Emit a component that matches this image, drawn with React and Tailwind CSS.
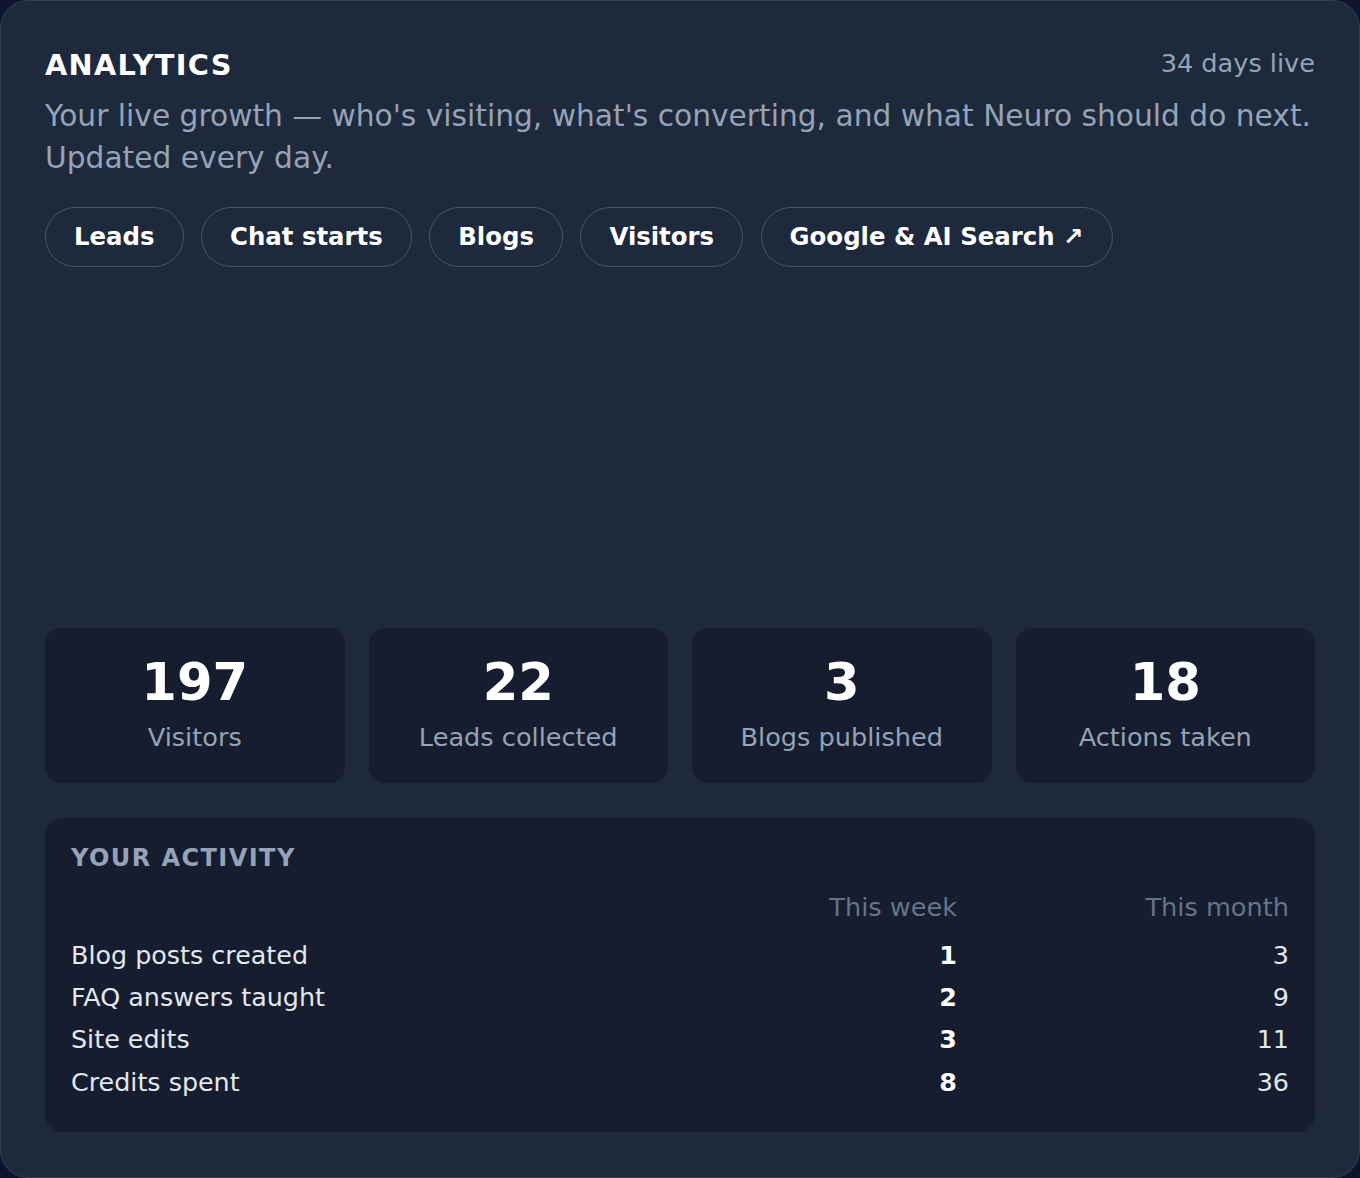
import React from "react";

const tabs = ["Leads", "Chat starts", "Blogs", "Visitors", "Google & AI Search ↗"];

const stats = [
  { value: "197", label: "Visitors" },
  { value: "22", label: "Leads collected" },
  { value: "3", label: "Blogs published" },
  { value: "18", label: "Actions taken" },
];

const activity = [
  { label: "Blog posts created", week: "1", month: "3" },
  { label: "FAQ answers taught", week: "2", month: "9" },
  { label: "Site edits", week: "3", month: "11" },
  { label: "Credits spent", week: "8", month: "36" },
];

export default function App() {
  return (
    <div
      className="min-h-screen bg-[#0c1430]"
      style={{ fontFamily: '"DejaVu Sans", Verdana, sans-serif' }}
    >
      <div className="h-[1178px] rounded-[28px] border border-[#334155] bg-[#1e293b] px-[44px] pt-[44px]">
        {/* header */}
        <div className="flex items-start justify-between">
          <h1 className="text-[28.8px] font-bold leading-[1.4] tracking-[0.045em] text-white">
            ANALYTICS
          </h1>
          <span className="mt-[1px] text-[25.6px] leading-[1.4] text-[#94a3b8]">34 days live</span>
        </div>
        <p className="mt-[10px] text-[29.7px] leading-[42px] text-[#94a3b8]">
          Your live growth — who's visiting, what's converting, and what Neuro should do next.
          Updated every day.
        </p>

        {/* tabs */}
        <div className="mt-[28px] flex gap-[17.5px]">
          {tabs.map((t) => (
            <button
              key={t}
              className="flex h-[60px] items-center rounded-full border-[1.5px] border-[#4a5568] px-[28px] text-[24.4px] font-bold text-white"
            >
              {t}
            </button>
          ))}
        </div>

        {/* chart area (empty) */}
        <div className="h-[361px]"></div>

        {/* stats */}
        <div className="grid grid-cols-4 gap-[24px]">
          {stats.map((s) => (
            <div
              key={s.label}
              className="flex flex-col items-center rounded-[16px] bg-[#151d2e] pt-[24px] pb-[27px]"
            >
              <div className="text-[51.2px] font-bold leading-[1.2] text-white">{s.value}</div>
              <div className="mt-[4px] text-[25.6px] leading-[1.5] text-[#94a3b8]">{s.label}</div>
            </div>
          ))}
        </div>

        {/* activity */}
        <div className="mt-[35px] rounded-[18px] bg-[#151d2e] px-[26px] pt-[25.6px] pb-[29px]">
          <h2 className="text-[24px] font-bold leading-[normal] tracking-[0.06em] text-[#94a3b8]">
            YOUR ACTIVITY
          </h2>
          <div className="mt-[14px] grid grid-cols-[1fr_200px_332px] text-[25.6px] leading-[42px]">
            <div></div>
            <div className="text-right text-[#64748b]">This week</div>
            <div className="text-right text-[#64748b]">This month</div>
          </div>
          <div className="mt-[6px]">
            {activity.map((r, i) => (
              <div
                key={r.label}
                className={
                  "grid grid-cols-[1fr_200px_332px] text-[25.4px] leading-[42px]" +
                  (i === 3 ? " mt-[1.5px]" : "")
                }
              >
                <div className="text-[#e2e8f0]">{r.label}</div>
                <div className="text-right font-bold text-white">{r.week}</div>
                <div className="text-right text-[#e2e8f0]">{r.month}</div>
              </div>
            ))}
          </div>
        </div>
      </div>
    </div>
  );
}
